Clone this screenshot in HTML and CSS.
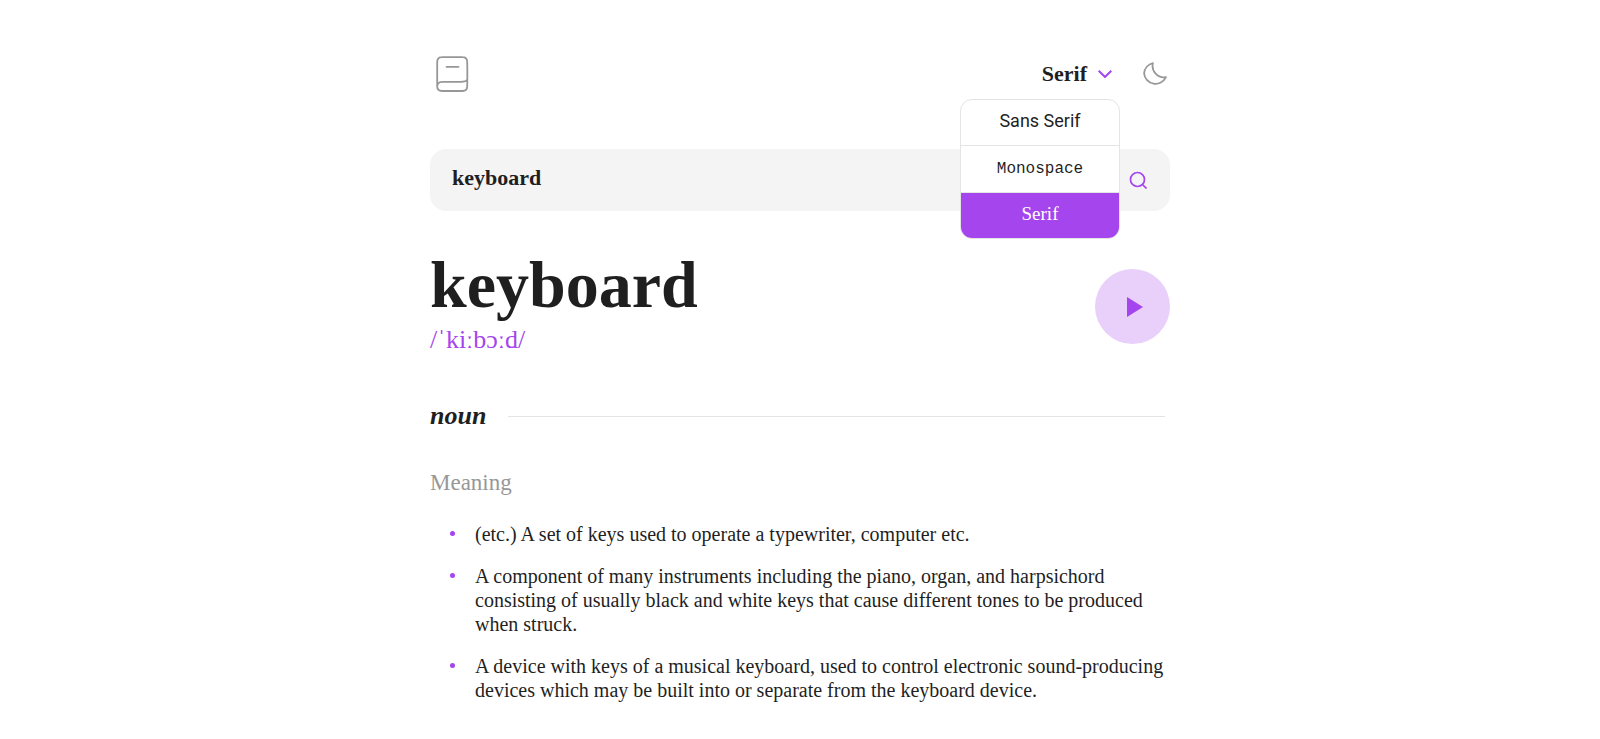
FILE: index.html
```html
<!DOCTYPE html>
<html lang="en">
<head>
<meta charset="utf-8">
<meta name="viewport" content="width=device-width, initial-scale=1">
<title>keyboard – Dictionary</title>
<link rel="stylesheet" href="styles.css">
</head>
<body>
<div class="page">
  <header class="header">
    <a class="logo" href="#" aria-label="Dictionary home">
      <svg width="33" height="36" viewBox="0 0 33 36" fill="none" stroke="#979797" stroke-width="1.8" stroke-linecap="round">
        <path d="M1.200 30.500V6Q1.200 1.200 6 1.200Q16 .9 26.500 1.200Q31.200 1.200 31.200 6Q31.500 18 31.200 30.500Q31.200 35 26.500 35H6Q1.200 35 1.200 30.500Q1.200 26 6 25.800H24.500Q30.500 25.800 31.200 23.500"/>
        <path d="M10.500 10.800h12"/>
      </svg>
    </a>
    <div class="controls">
      <div class="font-picker">
        <button class="font-toggle" type="button" aria-haspopup="listbox" aria-expanded="true">
          <span>Serif</span>
          <svg width="14" height="8" viewBox="0 0 14 8" fill="none" stroke="#a445ed" stroke-width="2"><path d="m.7.700 6.300 6.300 6.300-6.300"/></svg>
        </button>
        <ul class="font-menu">
          <li><button class="font-option sans" type="button">Sans Serif</button></li>
          <li><button class="font-option mono" type="button">Monospace</button></li>
          <li><button class="font-option serif selected" type="button">Serif</button></li>
        </ul>
      </div>
      <button class="theme-toggle" type="button" aria-label="Toggle dark mode">
        <svg width="24" height="24" viewBox="0 0 22 22" fill="none" stroke="#979797" stroke-width="1.6" stroke-linejoin="round"><path d="M1 10.400a10.500 10.500 0 0 0 20 3.500A10.500 10.500 0 0 1 9.100 1 10.500 10.500 0 0 0 1 10.400Z"/></svg>
      </button>
    </div>
  </header>

  <form class="search" role="search">
    <input class="search-input" type="text" value="keyboard" aria-label="Search for a word">
    <button class="search-button" type="submit" aria-label="Search">
      <svg width="18" height="18" viewBox="0 0 18 18" fill="none" stroke="#a445ed" stroke-width="1.7"><circle cx="8.500" cy="8.500" r="7"/><path d="m13 13 4.500 4.500"/></svg>
    </button>
  </form>

  <main>
    <section class="entry">
      <div class="entry-text">
        <h1 class="word">keyboard</h1>
        <p class="phonetic">/ˈkiːbɔːd/</p>
      </div>
      <button class="play" type="button" aria-label="Play pronunciation">
        <svg width="16" height="20" viewBox="0 0 16 20" fill="#a445ed"><path d="M0 0v20l16-10z"/></svg>
      </button>
    </section>

    <section>
      <h2 class="part"><em>noun</em></h2>
      <h3 class="label">Meaning</h3>
      <ul class="meanings">
        <li>(etc.) A set of keys used to operate a typewriter, computer etc.</li>
        <li>A component of many instruments including the piano, organ, and harpsichord consisting of usually black and white keys that cause different tones to be produced when struck.</li>
        <li>A device with keys of a musical keyboard, used to control electronic sound-producing devices which may be built into or separate from the keyboard device.</li>
      </ul>
    </section>
  </main>
</div>
</body>
</html>
```
FILE: styles.css
```css
* {
  box-sizing: border-box;
  margin: 0;
  padding: 0;
}

body {
  background: #fff;
  color: #1f1f1f;
  font-family: "Liberation Serif", "Times New Roman", serif;
}

button,
input {
  border: 0;
  background: none;
  color: inherit;
  font-family: inherit;
}

button {
  cursor: pointer;
}

svg {
  display: block;
}

.page {
  max-width: 740px;
  margin: 0 auto;
  padding-top: 56px;
}

.header {
  display: flex;
  align-items: center;
  justify-content: space-between;
  padding: 0 3px 0 6px;
}

.controls {
  display: flex;
  align-items: center;
  gap: 31px;
}

.font-picker {
  position: relative;
}

.font-toggle {
  display: flex;
  align-items: center;
  gap: 11px;
  font-size: 22px;
  font-weight: 700;
  line-height: 28px;
}

.font-menu {
  position: absolute;
  z-index: 1;
  top: 39px;
  right: -8px;
  width: 160px;
  overflow: hidden;
  border: 1px solid #e4e4e4;
  border-radius: 12px;
  background: #fff;
  list-style: none;
}

.font-menu li + li {
  border-top: 1px solid #e4e4e4;
}

.font-option {
  display: block;
  width: 100%;
  padding: 8px 0 12px;
  text-align: center;
  line-height: 25px;
}

.sans {
  font-family: Roboto, sans-serif;
  font-size: 18px;
}

.mono {
  padding: 11px 0 10px;
  font-family: "Liberation Mono", monospace;
  font-size: 16px;
}

.serif {
  font-size: 19px;
}

.selected {
  background: #a445ed;
  color: #fff;
}

.search {
  display: flex;
  align-items: center;
  height: 62px;
  margin-top: 57px;
  padding: 0 23px 0 22px;
  border-radius: 16px;
  background: #f4f4f4;
}

.search-input {
  flex: 1;
  min-width: 0;
  padding-bottom: 4px;
  outline: 0;
  font-size: 22px;
  font-weight: 700;
  line-height: 28px;
}

.entry {
  display: flex;
  align-items: center;
  justify-content: space-between;
  margin-top: 36px;
}

.entry-text {
  padding-bottom: 9px;
}

.word {
  font-size: 66px;
  line-height: 76px;
}

.phonetic {
  color: #a445ed;
  font-size: 26px;
  line-height: 34px;
}

.play {
  display: grid;
  place-items: center;
  width: 75px;
  height: 75px;
  padding-left: 4px;
  border-radius: 50%;
  background: #e8d0fa;
}

.part {
  display: flex;
  align-items: center;
  gap: 22px;
  margin-top: 34px;
  padding-right: 5px;
  font-size: 26px;
  line-height: 32px;
}

.part::after {
  content: "";
  flex: 1;
  height: 1px;
  background: #e4e4e4;
}

.label {
  margin-top: 36px;
  color: #979797;
  font-size: 23px;
  font-weight: 400;
  line-height: 30px;
}

.meanings {
  display: grid;
  gap: 18px;
  margin-top: 24px;
  padding-left: 20px;
  list-style: none;
  font-size: 20px;
  line-height: 24px;
}

.meanings li {
  display: flex;
  gap: 20px;
}

.meanings li::before {
  content: "";
  flex: none;
  width: 5px;
  height: 5px;
  margin-top: 9px;
  border-radius: 50%;
  background: #a445ed;
}
```
